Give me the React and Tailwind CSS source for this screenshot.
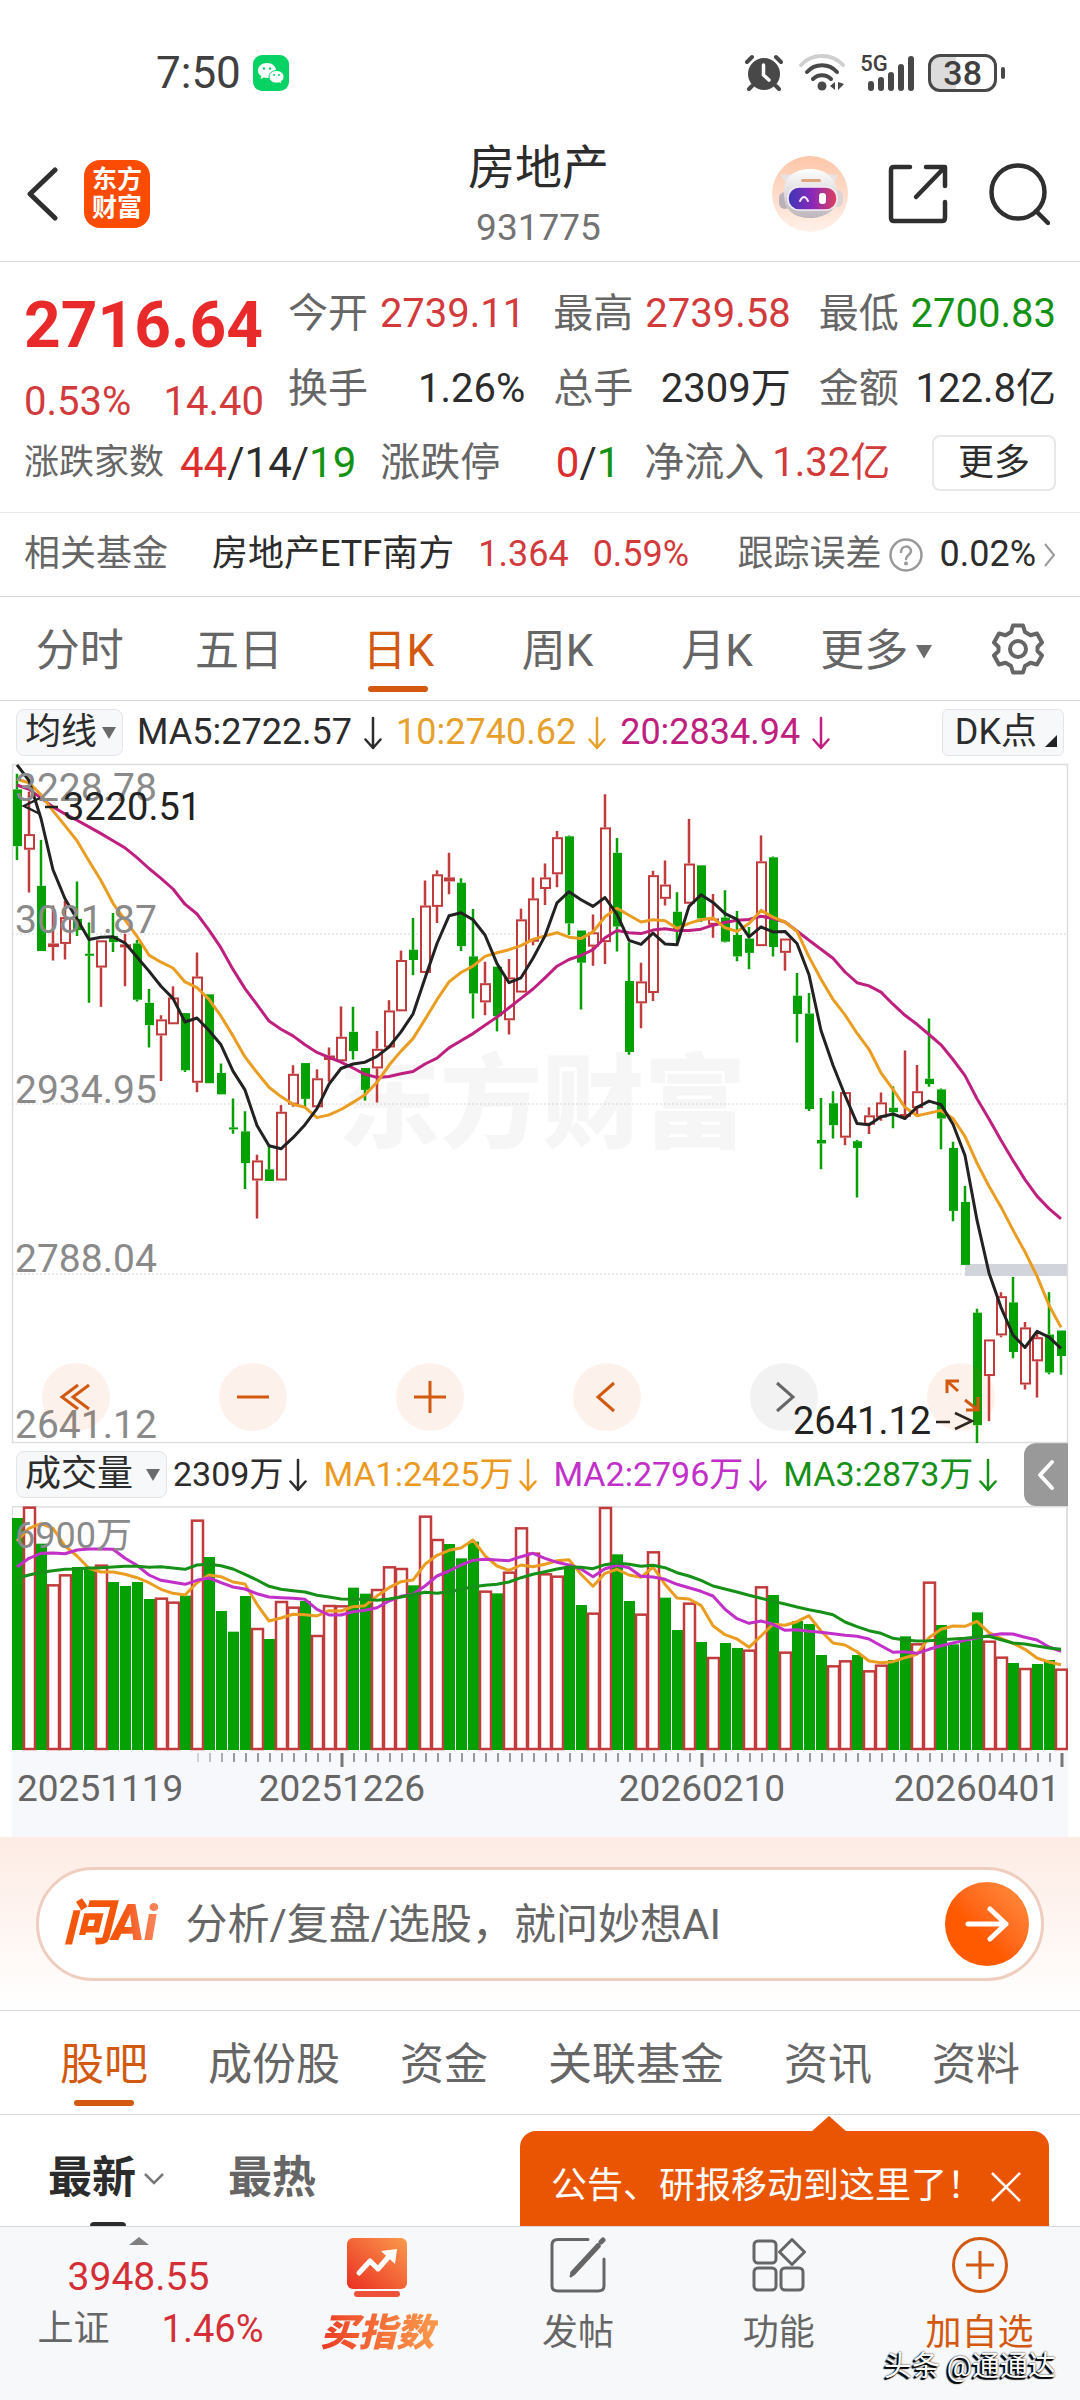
import { useState } from 'react'

const RED = '#c23b3c'
const GREEN = '#04a004'

// [body top, body bottom, high, low, up?] on the price axis, 28 = top line, 1548 = bottom line
const CANDLES = [
  [85, 212, 50, 243, 0], [185, 220, 90, 316, 1], [301, 447, 198, 447, 0], [430, 438, 345, 468, 1],
  [371, 431, 335, 466, 1], [375, 400, 291, 413, 0], [453, 457, 383, 563, 0], [423, 484, 423, 572, 1],
  [413, 427, 362, 449, 0], [432, 436, 408, 526, 1], [430, 556, 422, 560, 0], [563, 613, 532, 663, 0],
  [600, 636, 591, 738, 1], [551, 611, 526, 611, 1], [586, 714, 586, 718, 0], [504, 742, 450, 763, 1],
  [544, 743, 544, 743, 0], [720, 768, 699, 768, 0], [842, 846, 777, 856, 0], [851, 922, 806, 980, 0],
  [916, 961, 903, 1046, 1], [936, 962, 880, 962, 0], [807, 961, 792, 961, 1], [722, 791, 703, 796, 1],
  [698, 778, 698, 795, 0], [732, 797, 712, 797, 1], [681, 691, 663, 740, 1], [639, 694, 571, 694, 1],
  [628, 671, 572, 690, 0], [709, 758, 709, 782, 0], [666, 710, 626, 786, 1], [580, 663, 557, 663, 1],
  [467, 582, 446, 582, 1], [444, 467, 373, 501, 0], [345, 496, 289, 496, 1], [275, 348, 266, 384, 1],
  [282, 291, 227, 320, 1], [294, 436, 284, 447, 0], [459, 542, 353, 598, 0], [519, 562, 471, 591, 1],
  [482, 593, 482, 627, 0], [506, 602, 465, 634, 1], [376, 540, 352, 540, 1], [329, 426, 282, 434, 1],
  [282, 308, 251, 344, 1], [192, 275, 178, 304, 1], [190, 385, 188, 411, 0], [401, 473, 401, 578, 0],
  [405, 437, 365, 480, 1], [170, 427, 96, 476, 1], [227, 392, 194, 448, 0], [514, 673, 427, 679, 0],
  [515, 564, 473, 620, 1], [277, 541, 267, 559, 1], [298, 330, 244, 345, 1], [359, 397, 315, 428, 0],
  [251, 341, 151, 341, 1], [255, 374, 255, 382, 0], [374, 388, 319, 417, 1], [372, 426, 311, 428, 0],
  [411, 459, 357, 470, 0], [419, 451, 393, 488, 0], [246, 436, 188, 436, 1], [237, 438, 235, 459, 0],
  [419, 451, 419, 491, 1], [547, 588, 496, 652, 0], [587, 801, 541, 805, 0], [870, 878, 776, 936, 0],
  [788, 837, 761, 867, 0], [763, 865, 763, 882, 1], [873, 888, 870, 999, 0], [815, 836, 797, 857, 1],
  [786, 820, 764, 827, 1], [798, 808, 750, 844, 0], [812, 817, 670, 825, 1], [761, 799, 702, 817, 1],
  [733, 745, 598, 751, 0], [757, 822, 755, 891, 0], [888, 1029, 874, 1052, 0], [1009, 1150, 973, 1150, 0],
  [1257, 1509, 1248, 1549, 0], [1317, 1399, 1317, 1500, 1], [1220, 1308, 1211, 1312, 1], [1234, 1345, 1177, 1359, 0],
  [1290, 1418, 1278, 1429, 1], [1312, 1366, 1300, 1447, 1], [1306, 1391, 1211, 1395, 0], [1297, 1354, 1297, 1396, 0],
]

const MA5 = [30, 65, 150, 265, 330, 375, 421, 416, 415, 429, 460, 492, 526, 553, 606, 597, 625, 657, 716, 758, 838, 883, 890, 865, 836, 800, 745, 710, 700, 696, 683, 662, 628, 588, 508, 430, 368, 361, 377, 411, 475, 518, 507, 463, 413, 339, 314, 332, 347, 327, 365, 423, 432, 407, 431, 433, 347, 321, 338, 363, 376, 415, 393, 404, 403, 430, 500, 625, 703, 770, 833, 836, 818, 812, 822, 797, 783, 791, 835, 905, 1050, 1168, 1245, 1307, 1335, 1299, 1312, 1337]
const MA10 = [62, 70, 97, 133, 166, 200, 245, 289, 340, 377, 414, 456, 472, 485, 516, 529, 555, 593, 637, 684, 719, 752, 773, 790, 797, 820, 814, 802, 786, 769, 741, 703, 671, 643, 600, 556, 516, 495, 481, 459, 451, 444, 435, 421, 413, 406, 416, 419, 404, 370, 351, 367, 382, 377, 379, 396, 385, 377, 373, 395, 403, 385, 356, 371, 382, 403, 460, 510, 555, 590, 631, 667, 720, 757, 797, 816, 810, 804, 822, 862, 922, 974, 1020, 1072, 1121, 1175, 1240, 1290]
const MA20 = [75, 85, 104, 124, 140, 154, 169, 184, 200, 216, 238, 262, 284, 308, 342, 364, 400, 440, 488, 531, 567, 604, 622, 637, 657, 674, 685, 696, 709, 723, 730, 728, 722, 717, 700, 687, 664, 648, 632, 613, 595, 574, 553, 532, 507, 481, 466, 457, 444, 417, 401, 406, 408, 400, 397, 401, 401, 398, 389, 383, 378, 376, 369, 374, 382, 402, 423, 443, 463, 494, 518, 525, 539, 566, 591, 611, 634, 657, 690, 726, 778, 823, 871, 916, 959, 996, 1024, 1047]

// bar tops on the volume axis, 195 = top line, 927 = base line
const VOLUMES = [231, 197, 308, 430, 400, 378, 383, 371, 423, 435, 423, 474, 470, 482, 464, 236, 348, 510, 572, 465, 561, 594, 480, 497, 480, 582, 492, 493, 440, 458, 444, 376, 381, 433, 224, 294, 309, 352, 302, 449, 457, 392, 259, 335, 397, 404, 377, 492, 515, 198, 340, 480, 518, 331, 470, 567, 485, 603, 648, 606, 621, 626, 436, 462, 632, 540, 549, 642, 673, 658, 642, 688, 671, 657, 586, 607, 422, 552, 610, 600, 514, 599, 647, 666, 681, 669, 657, 683]
const VOLUME_UP = new Set([1, 3, 4, 7, 12, 13, 15, 20, 22, 23, 25, 26, 27, 30, 31, 32, 34, 35, 39, 41, 42, 43, 44, 45, 48, 49, 52, 53, 56, 58, 61, 62, 64, 68, 69, 71, 72, 75, 76, 81, 82, 84, 87])
const VMA1 = [300, 262, 248, 262, 315, 345, 382, 393, 393, 400, 410, 425, 445, 457, 462, 425, 402, 407, 423, 429, 490, 540, 531, 520, 521, 525, 509, 510, 497, 494, 465, 440, 422, 417, 370, 343, 328, 321, 297, 344, 375, 388, 372, 377, 370, 359, 356, 400, 436, 397, 385, 402, 409, 378, 430, 471, 474, 493, 554, 581, 594, 619, 585, 550, 553, 542, 524, 570, 606, 612, 632, 660, 665, 662, 650, 640, 590, 565, 555, 556, 541, 575, 592, 607, 625, 651, 663, 671]
const VMA2 = [378, 352, 337, 336, 338, 327, 324, 324, 325, 352, 373, 402, 418, 424, 430, 418, 411, 425, 438, 444, 458, 468, 470, 472, 475, 505, 522, 522, 512, 508, 500, 480, 466, 460, 435, 405, 390, 372, 358, 355, 357, 359, 347, 337, 352, 364, 372, 384, 407, 383, 373, 380, 406, 408, 415, 430, 440, 451, 465, 505, 533, 547, 540, 550, 568, 566, 571, 574, 578, 583, 586, 594, 614, 634, 632, 637, 625, 614, 606, 598, 590, 584, 578, 579, 589, 597, 618, 631]
const VMA3 = [412, 402, 394, 389, 385, 384, 381, 380, 378, 376, 376, 379, 377, 381, 385, 372, 370, 374, 384, 400, 417, 436, 445, 449, 453, 463, 468, 474, 475, 475, 478, 474, 468, 461, 454, 457, 452, 445, 437, 433, 430, 423, 410, 400, 392, 384, 378, 379, 383, 371, 366, 370, 376, 373, 380, 395, 405, 418, 435, 444, 453, 463, 472, 481, 489, 498, 506, 513, 521, 543, 557, 569, 577, 592, 597, 600, 599, 596, 594, 592, 588, 586, 596, 606, 609, 615, 621, 625]

const STEP = 12
const cx = i => i * STEP + 5
const priceY = v => (v - 28) / 2.24
const volumeY = v => (v - 195) / 3
const points = (list, scale) => list.map((v, i) => `${cx(i)},${scale(v).toFixed(1)}`).join(' ')

const QUOTES = [
  { label: '今开', value: '2739.11', tone: 'text-[#d23a3c]' },
  { label: '最高', value: '2739.58', tone: 'text-[#d23a3c]' },
  { label: '最低', value: '2700.83', tone: 'text-[#149214]' },
  { label: '换手', value: '1.26%', tone: 'text-[#2c2c2c]' },
  { label: '总手', value: '2309万', tone: 'text-[#2c2c2c]' },
  { label: '金额', value: '122.8亿', tone: 'text-[#2c2c2c]' },
]

const PERIODS = ['分时', '五日', '日K', '周K', '月K', '更多']
const SECTIONS = ['股吧', '成份股', '资金', '关联基金', '资讯', '资料']

export default function App() {
  const [period, setPeriod] = useState('日K')
  const [section, setSection] = useState('股吧')
  const [tipOpen, setTipOpen] = useState(true)

  return (
    <div className="w-full overflow-x-hidden bg-white text-[#2c2c2c] font-[Roboto,'Noto_Sans_CJK_SC',sans-serif]">
      <StatusBar />
      <Header />
      <Quotes />
      <RelatedFund />

      <nav className="flex border-b border-[#d5d7d8]">
        {PERIODS.map(p => (
          <button
            key={p}
            onClick={() => setPeriod(p)}
            className={`relative flex flex-1 items-center justify-center gap-2 pt-1.5 text-[44px] leading-[97px] ${p === period ? 'text-[#d2590f]' : 'text-[#666]'}`}
          >
            {p}
            {p === '更多' && <Triangle className="w-4" />}
            {p === period && <span className="absolute bottom-2 left-1/2 h-1.5 w-[60px] -translate-x-1/2 rounded-full bg-[#d2590f]" />}
          </button>
        ))}
        <button aria-label="设置" className="flex w-[124px] items-center justify-center">
          <GearIcon />
        </button>
      </nav>

      <main className="px-3">
        <div className="flex items-center px-1 py-2 text-[36px] leading-[45px] whitespace-nowrap">
          <PickBox label="均线指标" options={['均线']} />
          <span className="ml-3.5">MA5:2722.57</span>
          <DownArrow className="ml-3 text-[#2c2c2c]" />
          <span className="ml-3.5 text-[#e6a02c]">10:2740.62</span>
          <DownArrow className="ml-3 text-[#e6a02c]" />
          <span className="ml-3.5 text-[#bf2080]">20:2834.94</span>
          <DownArrow className="ml-3 text-[#bf2080]" />
          <button className="ml-auto flex items-end gap-2 rounded-md border border-[#e3e5e9] bg-[#f7f8fa] pr-1.5 pl-3">
            DK点
            <svg viewBox="0 0 12 12" className="mb-2 w-3"><path d="M12 0V12H0Z" fill="#222" /></svg>
          </button>
        </div>

        <PriceChart />

        <div className="flex items-center pl-1 text-[36px] leading-[45px] whitespace-nowrap">
          <PickBox label="副图指标" options={['成交量']} wide />
          <span className="ml-1.5 text-[34px]">2309万</span>
          <DownArrow className="ml-1.5 text-[#2c2c2c]" />
          <span className="ml-4 text-[34px] text-[#eb9a1f]">MA1:2425万</span>
          <DownArrow className="ml-1.5 text-[#eb9a1f]" />
          <span className="ml-4 text-[34px] text-[#c22fc9]">MA2:2796万</span>
          <DownArrow className="ml-1.5 text-[#c22fc9]" />
          <span className="ml-4 text-[34px] text-[#169016]">MA3:2873万</span>
          <DownArrow className="ml-1.5 text-[#169016]" />
          <button aria-label="展开" className="ml-auto flex h-[63px] w-11 flex-none items-center justify-center rounded-l-xl bg-[#999]">
            <svg viewBox="0 0 20 32" className="w-5" fill="none" stroke="#fff" strokeWidth="4" strokeLinecap="round" strokeLinejoin="round">
              <path d="M16 3L4 16L16 29" />
            </svg>
          </button>
        </div>

        <VolumeChart />
      </main>

      <AskBar />

      <nav className="flex justify-between border-y border-[#d5d7d8] px-[60px]">
        {SECTIONS.map(s => (
          <button
            key={s}
            onClick={() => setSection(s)}
            className={`relative pt-1.5 text-[44px] leading-[97px] ${s === section ? 'text-[#d2590f]' : 'text-[#666]'}`}
          >
            {s}
            {s === section && <span className="absolute bottom-2 left-1/2 h-1.5 w-[60px] -translate-x-1/2 rounded-full bg-[#d2590f]" />}
          </button>
        ))}
      </nav>

      <div className="relative flex items-start pl-12 text-[44px] leading-[95px] font-bold">
        <button className="relative flex items-center gap-2 pt-4">
          最新
          <svg viewBox="0 0 20 12" className="w-5" fill="none" stroke="#777" strokeWidth="2.5"><path d="M1 1L10 10L19 1" /></svg>
          <span className="absolute bottom-0 left-[42px] h-1 w-9 rounded-t bg-[#2c2c2c]" />
        </button>
        <button className="ml-16 pt-4 text-[#666]">最热</button>
        {tipOpen && (
          <div className="absolute right-[31px] bottom-0 flex items-center rounded-t-2xl bg-[#ea5504] pt-5 pr-7 pb-1 pl-[31px] text-[36px] leading-[71px] font-normal text-white">
            <svg viewBox="0 0 36 16" className="absolute -top-[15px] right-[202px] w-9"><path d="M18 0L36 16H0Z" fill="#ea5504" /></svg>
            公告、研报移动到这里了！
            <button aria-label="关闭" onClick={() => setTipOpen(false)} className="ml-2">
              <svg viewBox="0 0 30 30" className="w-[30px]" fill="none" stroke="#fff" strokeWidth="2.5"><path d="M1 1L29 29M29 1L1 29" /></svg>
            </button>
          </div>
        )}
      </div>

      <BottomBar />
    </div>
  )
}

function StatusBar() {
  return (
    <div className="flex items-center pt-12 pr-[75px] pb-10 pl-[156px] text-[44px] leading-[50px] text-[#404040]">
      7:50
      <svg viewBox="0 0 36 36" className="ml-3 w-9">
        <rect width="36" height="36" rx="9" fill="#07d365" />
        <path d="M14 8c-5 0-9 3.300-9 7.400 0 2.300 1.300 4.300 3.300 5.700L7.500 24l3.200-1.600c1 .3 2.200.5 3.300.5 5 0 9-3.300 9-7.500S19 8 14 8z" fill="#fff" />
        <path d="M23.500 15.500c-4.200 0-7.500 2.800-7.500 6.300s3.300 6.300 7.500 6.300c.9 0 1.800-.1 2.600-.4l2.700 1.400-.7-2.500c1.800-1.100 2.900-2.800 2.900-4.800 0-3.500-3.300-6.300-7.500-6.300z" fill="#fff" stroke="#07d365" strokeWidth="1" />
        <g fill="#07d365">
          <circle cx="11" cy="13.500" r="1.200" /><circle cx="17" cy="13.500" r="1.200" />
          <circle cx="21" cy="20" r="1" /><circle cx="26" cy="20" r="1" />
        </g>
      </svg>

      <div className="ml-auto flex items-center gap-3.5">
        <svg viewBox="0 0 40 38" className="w-10" fill="none" stroke="#484848" strokeLinecap="round">
          <circle cx="20" cy="20" r="16" fill="#484848" stroke="none" />
          <path d="M3 8L8 3M37 8L32 3M8 32L5 35M32 32L35 35" strokeWidth="4" />
          <path d="M19.500 11V21L25 26" stroke="#fff" strokeWidth="3.500" />
        </svg>
        <svg viewBox="0 0 48 38" className="w-12" fill="none" stroke="#484848" strokeWidth="4" strokeLinecap="round">
          <path d="M3 11C14 -1 34 -1 45 11" stroke="#cfcfcf" />
          <path d="M9 18C17 9 31 9 39 18" />
          <path d="M15 25C20 20 28 20 33 25" />
          <circle cx="24" cy="32" r="4.500" fill="#484848" stroke="none" />
          <path d="M37 28V36L32 32ZM40 28V36L46 30Z" fill="#484848" stroke="none" />
        </svg>
        <div className="relative">
          <span className="absolute top-0 left-0 text-[22px] leading-5 font-medium">5G</span>
          <svg viewBox="0 0 54 38" className="w-[54px]" stroke="#484848" strokeWidth="6" strokeLinecap="round">
            <path d="M11 30V34M21 26V34M31 21V34M41 13V34M51 5V34" />
          </svg>
        </div>
        <div className="flex items-center gap-1">
          <div className="rounded-xl border-[3px] border-[#484848] bg-linear-to-r from-[#dcdcdc] from-40% to-white to-40% px-3 text-[34px] leading-8 font-medium">38</div>
          <div className="h-3 w-1 rounded-full bg-[#484848]" />
        </div>
      </div>
    </div>
  )
}

function Header() {
  return (
    <header className="grid grid-cols-[1fr_auto_1fr] items-center border-b border-[#d5d7d8] pb-[3px] pr-[30px] pl-[27px]">
      <div className="flex items-center gap-[26px] pb-2">
        <button aria-label="返回">
          <svg viewBox="0 0 31 54" className="w-[31px]" fill="none" stroke="#2f2f2f" strokeWidth="5" strokeLinecap="round" strokeLinejoin="round"><path d="M28 3L3 27L28 51" /></svg>
        </button>
        <a href="#home" className="rounded-2xl bg-[#fc4b03] px-2 py-1.5 text-center text-[25px] leading-7 font-bold text-white">
          东方<br />财富
        </a>
      </div>
      <div className="text-center leading-[60px]">
        <h1 className="text-[47px]">房地产</h1>
        <p className="text-[37px] text-[#737373]">931775</p>
      </div>
      <div className="flex items-center justify-end gap-10 pb-2">
        <button aria-label="智能助手"><RobotIcon /></button>
        <button aria-label="分享">
          <svg viewBox="0 0 60 60" className="w-[60px]" fill="none" stroke="#2f2f2f" strokeWidth="4.500" strokeLinecap="round" strokeLinejoin="round">
            <path d="M22 3H6Q3 3 3 6V54Q3 57 6 57H54Q57 57 57 54V38M38 3H57V22M56 4L28 33" />
          </svg>
        </button>
        <button aria-label="搜索">
          <svg viewBox="0 0 62 62" className="w-[62px]" fill="none" stroke="#2f2f2f" strokeWidth="4.500" strokeLinecap="round">
            <circle cx="30" cy="29" r="26.500" /><path d="M48 48L60 60" />
          </svg>
        </button>
      </div>
    </header>
  )
}

function RobotIcon() {
  return (
    <svg viewBox="0 0 76 76" className="w-[76px]">
      <defs>
        <linearGradient id="robotBg" x1="0" y1="0" x2="0" y2="1"><stop offset="0" stopColor="#fdc6a8" /><stop offset="1" stopColor="#fff1ea" /></linearGradient>
        <linearGradient id="visor"><stop offset="0" stopColor="#3d36b8" /><stop offset="0.500" stopColor="#8a28b8" /><stop offset="1" stopColor="#e0405c" /></linearGradient>
        <linearGradient id="shell" x1="0" y1="0" x2="0" y2="1"><stop offset="0" stopColor="#fff" /><stop offset="1" stopColor="#bdb5bb" /></linearGradient>
      </defs>
      <circle cx="38" cy="38" r="38" fill="url(#robotBg)" />
      <path d="M8 19L19 18L17 31ZM66 19L57 18L60 31Z" fill="#e9e1e2" />
      <rect x="7" y="36" width="12" height="17" rx="6" fill="#b9b2b8" />
      <rect x="60" y="34" width="11" height="17" rx="6" fill="#dcd4d8" />
      <path d="M12 40C10 22 22 13 38 13S64 22 66 38C67 54 52 62 38 62S13 56 12 40Z" fill="url(#shell)" />
      <rect x="29" y="23" width="20" height="3" rx="1.500" fill="#dfa57c" />
      <rect x="16" y="31" width="49" height="23" rx="11" fill="url(#visor)" stroke="#f4eef5" strokeWidth="1.500" />
      <path d="M28 45Q32 37 36 45" fill="none" stroke="#f1eaff" strokeWidth="2" strokeLinecap="round" />
      <rect x="47" y="37" width="7" height="11" rx="3" fill="#fff" />
    </svg>
  )
}

function Quotes() {
  return (
    <section className="border-b border-[#e9e9e9] px-6 pt-3.5 pb-5 text-[40px]">
      <div className="flex gap-6">
        <div className="w-[240px] flex-none pt-4 text-[#d23a3c]">
          <p className="text-[64px] leading-[68px] font-bold text-[#e92a2b]">2716.64</p>
          <p className="flex justify-between pt-3 leading-[60px]"><span>0.53%</span><span>14.40</span></p>
        </div>
        <dl className="grid flex-1 grid-cols-3 content-start gap-x-7 leading-[75px]">
          {QUOTES.map(q => (
            <div key={q.label} className="flex justify-between whitespace-nowrap">
              <dt className="text-[#666]">{q.label}</dt>
              <dd className={q.tone}>{q.value}</dd>
            </div>
          ))}
        </dl>
      </div>
      <div className="flex items-center gap-6 pt-0.5 leading-[58px] whitespace-nowrap">
        <p className="flex gap-4">
          <span className="text-[35px] text-[#666]">涨跌家数</span>
          <span className="text-[42px]"><b className="font-normal text-[#dc2e2f]">44</b>/14/<b className="font-normal text-[#149214]">19</b></span>
        </p>
        <p className="flex w-[240px] justify-between">
          <span className="text-[#666]">涨跌停</span>
          <span className="text-[42px]"><b className="font-normal text-[#dc2e2f]">0</b>/<b className="font-normal text-[#149214]">1</b></span>
        </p>
        <p className="flex gap-2">
          <span className="text-[#666]">净流入</span>
          <span className="text-[#d23a3c]">1.32亿</span>
        </p>
        <button className="ml-auto rounded-lg border-2 border-[#e8e8e8] px-6 text-[36px] leading-[52px]">更多</button>
      </div>
    </section>
  )
}

function RelatedFund() {
  return (
    <a href="#fund" className="flex items-center border-b border-[#d5d7d8] px-6 text-[36px] leading-[83px] whitespace-nowrap">
      <span className="text-[#666]">相关基金</span>
      <span className="ml-11">房地产ETF南方</span>
      <span className="ml-6 text-[#d23a3c]">1.364</span>
      <span className="ml-6 text-[#d23a3c]">0.59%</span>
      <span className="ml-auto text-[#666]">跟踪误差</span>
      <svg viewBox="0 0 34 34" className="mr-4 ml-2 w-[34px]" fill="none" stroke="#999" strokeWidth="2.500" strokeLinecap="round">
        <circle cx="17" cy="17" r="15.500" />
        <path d="M12 14C12 7 22 7 22 13C22 17 17 17 17 21" />
        <circle cx="17" cy="25.500" r="0.800" fill="#999" />
      </svg>
      <span>0.02%</span>
      <svg viewBox="0 0 12 24" className="ml-2 w-3" fill="none" stroke="#999" strokeWidth="2"><path d="M1 1L10 12L1 23" /></svg>
    </a>
  )
}

function PickBox({ label, options, wide }) {
  return (
    <div className="flex items-center rounded-lg border border-[#e3e5e9] bg-[#f7f8fa] pr-1.5 pl-2">
      <select aria-label={label} className={`appearance-none bg-transparent leading-[45px] outline-none ${wide ? 'mr-3' : 'mr-1'}`}>
        {options.map(o => <option key={o}>{o}</option>)}
      </select>
      <Triangle className="w-3.5" />
    </div>
  )
}

function Triangle({ className }) {
  return <svg viewBox="0 0 14 12" className={className}><path d="M0 0H14L7 12Z" fill="#6b6b6b" /></svg>
}

function DownArrow({ className }) {
  return (
    <svg viewBox="0 0 18 34" className={`w-[18px] flex-none ${className}`} fill="none" stroke="currentColor" strokeWidth="2.500" strokeLinecap="round" strokeLinejoin="round">
      <path d="M9 2V32M1.500 23.500L9 32L16.500 23.500" />
    </svg>
  )
}

function GearIcon() {
  return (
    <svg viewBox="0 0 52 52" className="w-[52px]" fill="none" stroke="#666" strokeWidth="4" strokeLinejoin="round">
      <path d="M21 2.500H31L33 9L38.500 12.300L45 10.500L50 19.500L45.500 24V28L50 32.500L45 41.500L38.500 39.700L33 43L31 49.500H21L19 43L13.500 39.700L7 41.500L2 32.500L6.500 28V24L2 19.500L7 10.500L13.500 12.300L19 9Z" />
      <circle cx="26" cy="26" r="8" />
    </svg>
  )
}

const TOOLS = [
  { label: '最早', d: 'M26 12L10 24L26 36M37 12L21 24L37 36' },
  { label: '缩小', d: 'M8 24H40' },
  { label: '放大', d: 'M8 24H40M24 8V40' },
  { label: '向左', d: 'M31 10L15 24L31 38' },
  { label: '向右', d: 'M17 10L33 24L17 38', off: true },
  { label: '全屏', d: 'M10 20V8H22M10 8L21 18M41 24V37H29M41 37L28 27' },
]

function PriceChart() {
  return (
    <div className="relative">
      <svg viewBox="0 0 1056 679" className="block w-full overflow-visible font-[Roboto,'Noto_Sans_CJK_SC',sans-serif]">
        <rect x="0.500" y="0.500" width="1055" height="678" fill="none" stroke="#dedede" strokeWidth="1.500" />
        <text x="326" y="376" fontSize="102" fontWeight="900" fill="#f6f6f6">东方财富</text>
        {[170, 340, 510].map(y => <path key={y} d={`M0 ${y}H1056`} stroke="#d6d6d6" strokeDasharray="2 2" />)}
        <rect x="953" y="500" width="102" height="12" fill="#d1d4da" />
        {CANDLES.map(([top, bottom, high, low, up], i) => {
          const color = up ? RED : GREEN
          const y = priceY(top)
          const h = Math.max(priceY(bottom) - y, 2)
          return (
            <g key={i} stroke={color} strokeWidth="2.500">
              <path d={`M${cx(i)} ${priceY(high)}V${y}M${cx(i)} ${y + h}V${priceY(low)}`} />
              {up
                ? <rect x={cx(i) - 4} y={y + 1} width="9" height={Math.max(h - 2, 1)} fill="#fff" strokeWidth="2" />
                : <rect x={cx(i) - 4} y={y} width="9" height={h} fill={GREEN} stroke="none" />}
            </g>
          )
        })}
        <g fill="none" strokeWidth="3" strokeLinejoin="round">
          <polyline points={points(MA20, priceY)} stroke="#bf2080" />
          <polyline points={points(MA10, priceY)} stroke="#eb9d22" />
          <polyline points={points(MA5, priceY)} stroke="#222" />
        </g>
        <g fontSize="39" fill="#8a8a8a">
          <text x="3" y="37">3228.78</text>
          <text x="3" y="169">3081.87</text>
          <text x="3" y="339">2934.95</text>
          <text x="3" y="508">2788.04</text>
          <text x="3" y="674">2641.12</text>
        </g>
        <g fontSize="38" fill="#222">
          <text x="51" y="56">3220.51</text>
          <text x="781" y="670">2641.12</text>
        </g>
        <path d="M28 34L12 42L28 50M33 43H46M924 658H938M943 649L960 657L943 665" fill="none" stroke="#222" strokeWidth="2.500" />
      </svg>
      <div className="absolute inset-x-0 bottom-3 flex justify-between pr-[73px] pl-[30px]">
        {TOOLS.map(t => (
          <button
            key={t.label}
            aria-label={t.label}
            className={`flex size-[68px] items-center justify-center rounded-full ${t.off ? 'bg-black/5 text-[#666]' : 'bg-[#ea5504]/8 text-[#d2590f]'}`}
          >
            <svg viewBox="0 0 48 48" className="w-12" fill="none" stroke="currentColor" strokeWidth="3"><path d={t.d} /></svg>
          </button>
        ))}
      </div>
    </div>
  )
}

function VolumeChart() {
  return (
    <svg viewBox="0 0 1056 331" className="block w-full font-[Roboto,'Noto_Sans_CJK_SC',sans-serif]">
      <rect y="244" width="1056" height="87" fill="#f7f8fb" />
      <path d="M0 244V0.500H1055V244" fill="none" stroke="#dedede" strokeWidth="2" />
      {VOLUMES.map((v, i) => {
        const y = volumeY(v)
        return VOLUME_UP.has(i)
          ? <rect key={i} x={i * STEP} y={y + 1} width="11" height={243 - y - 1} fill="#fff" stroke={RED} strokeWidth="2.500" />
          : <rect key={i} x={i * STEP} y={y} width="11" height={244 - y} fill={GREEN} />
      })}
      <g fill="none" strokeWidth="3" strokeLinejoin="round">
        <polyline points={points(VMA1, volumeY)} stroke="#eb9d22" />
        <polyline points={points(VMA2, volumeY)} stroke="#c22fc9" />
        <polyline points={points(VMA3, volumeY)} stroke="#169016" />
      </g>
      <text x="3" y="42" fontSize="36" fill="#8a8a8a">6900万</text>
      {VOLUMES.map((_, i) => i > 14 && (
        <path
          key={i}
          d={`M${cx(i) + 1} 247V${i % 30 === 27 ? 261 : 256}`}
          stroke="#777"
          strokeWidth={i % 30 === 27 ? 3 : 1.5}
          opacity={Math.min((i - 13) / 5, 1)}
        />
      ))}
      <g fontSize="37" fill="#666">
        <text x="5" y="295">20251119</text>
        <text x="330" y="295" textAnchor="middle">20251226</text>
        <text x="690" y="295" textAnchor="middle">20260210</text>
        <text x="1048" y="295" textAnchor="end">20260401</text>
      </g>
    </svg>
  )
}

function AskBar() {
  return (
    <section className="bg-linear-to-b from-[#fdebe4] to-white px-9 pt-[30px] pb-[29px]">
      <form
        onSubmit={e => e.preventDefault()}
        className="flex items-center rounded-full border-[3px] border-[#efcdbf] bg-white py-3 pr-3 pl-6"
      >
        <span className="bg-linear-to-r from-[#f4560c] from-60% to-[#fb9068] bg-clip-text pr-2 text-[49px] leading-[60px] font-black text-transparent italic">问Ai</span>
        <input
          aria-label="问妙想AI"
          placeholder="分析/复盘/选股，就问妙想AI"
          className="ml-5 min-w-0 flex-1 text-[42px] outline-none placeholder:text-[#666]"
        />
        <button aria-label="发送" className="flex size-[84px] flex-none items-center justify-center rounded-full bg-linear-to-tr from-[#ff5a00] from-40% to-[#ff8f40]">
          <svg viewBox="0 0 44 38" className="w-11" fill="none" stroke="#fff" strokeWidth="5" strokeLinecap="round" strokeLinejoin="round"><path d="M3 19H41M25 4L41 19L25 34" /></svg>
        </button>
      </form>
    </section>
  )
}

function BottomBar() {
  return (
    <footer className="relative flex border-t border-[#d5d7d8] bg-[#f7f8fa] pt-2.5 pb-11 text-[36px] leading-12 text-[#666]">
      <button className="flex w-[277px] flex-col items-center text-[#d42f36]">
        <svg viewBox="0 0 20 8" className="w-5"><path d="M10 0L20 8H0Z" fill="#808080" /></svg>
        <span className="pt-2 pb-1 text-[39px]">3948.55</span>
        <span className="flex gap-13 pl-6"><span className="text-[#666]">上证</span><span className="text-[38px]">1.46%</span></span>
      </button>

      <button className="flex flex-1 flex-col items-center gap-3">
        <svg viewBox="0 0 60 60" className="w-[60px]">
          <defs>
            <linearGradient id="buy" x1="0" y1="1" x2="1" y2="0"><stop offset="0" stopColor="#ea2f22" /><stop offset="1" stopColor="#fb9a4c" /></linearGradient>
          </defs>
          <rect y="1" width="60" height="51" rx="6" fill="url(#buy)" />
          <rect x="7" y="54" width="46" height="6" rx="3" fill="#ee5138" />
          <path d="M12 36L23 24L31 32L44 17" fill="none" stroke="#fff" strokeWidth="5" strokeLinejoin="round" strokeLinecap="round" />
          <path d="M34 14L50 12L48 27Z" fill="#fff" />
        </svg>
        <span className="bg-linear-to-r from-[#ea3323] to-[#fb9a4c] bg-clip-text px-1 text-[38px] font-black text-transparent italic">买指数</span>
      </button>

      <button className="flex flex-1 flex-col items-center gap-4">
        <svg viewBox="0 0 56 56" className="w-14" fill="none" stroke="#666" strokeWidth="3" strokeLinecap="round">
          <path d="M38 2.500H8Q2 2.500 2 8V49Q2 54 8 54H48Q54 54 54 49V22" />
          <path d="M48 9L23 36" strokeWidth="5.500" /><path d="M51 5L53 3" strokeWidth="5" /><path d="M23 36L21 39" />
        </svg>
        发帖
      </button>

      <button className="flex flex-1 flex-col items-center gap-4">
        <svg viewBox="0 0 54 56" className="w-[54px]" fill="none" stroke="#666" strokeWidth="3" strokeLinejoin="round">
          <rect x="2" y="4" width="22" height="22" rx="4" />
          <rect x="2" y="31" width="22" height="22" rx="4" />
          <rect x="29" y="31" width="22" height="22" rx="4" />
          <path d="M40 2.500L52.500 15L40 27.500L27.500 15Z" />
        </svg>
        功能
      </button>

      <button className="flex flex-1 flex-col items-center gap-4 text-[#d2590f]">
        <svg viewBox="0 0 56 56" className="w-14" fill="none" stroke="#d2590f" strokeWidth="3">
          <circle cx="28" cy="28" r="26.500" /><path d="M14 28H42M28 14V42" />
        </svg>
        加自选
      </button>

      <span className="absolute right-6 bottom-3.5 text-[28px] leading-10 text-white [text-shadow:-1px_1px_1px_#000,-2px_2px_1px_#000,0_0_2px_#000]">头条 @通通达</span>
    </footer>
  )
}
